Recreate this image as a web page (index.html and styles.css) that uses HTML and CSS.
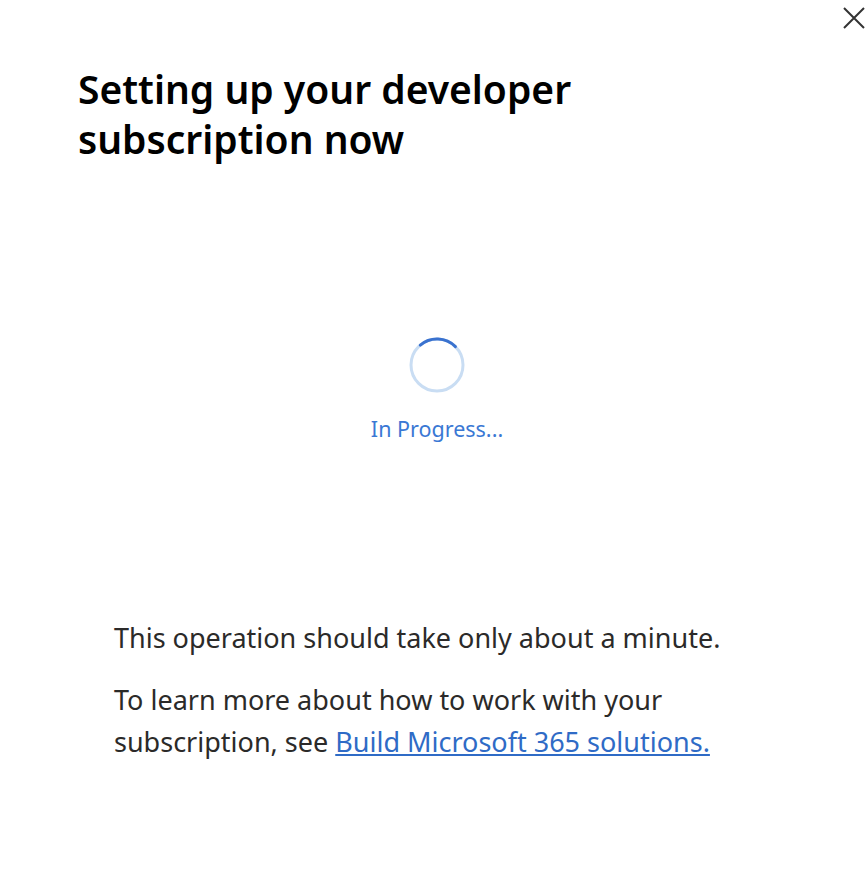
FILE: index.html
```html
<!DOCTYPE html>
<html lang="en">
<head>
    <meta charset="UTF-8">
    <meta name="viewport" content="width=device-width, initial-scale=1.0">
    <title>Setting up your developer subscription</title>
    <link rel="stylesheet" href="styles.css">
</head>
<body>

    <div class="dialog">
        <button type="button" class="close" aria-label="Close">
            <svg width="24" height="24" viewBox="0 0 24 24">
                <path d="M2 2 L22 22 M22 2 L2 22" stroke="#333" stroke-width="2" fill="none"/>
            </svg>
        </button>

        <h1 class="title">Setting up your developer subscription now</h1>

        <div class="progress">
            <div class="spinner">
                <svg width="58" height="58" viewBox="0 0 58 58">
                    <circle cx="29" cy="29" r="26" stroke="#c9ddf3" stroke-width="3" fill="none"/>
                    <!-- dark arc across the top -->
                    <path d="M12.3 9.1 A26 26 0 0 1 47.4 10.6" stroke="#3a72cf" stroke-width="3" fill="none" stroke-linecap="round"/>
                </svg>
            </div>
            <div class="progress-label">In Progress...</div>
        </div>

        <div class="notes">
            <p>This operation should take only about a minute.</p>
            <p>To learn more about how to work with your subscription, see <a href="#">Build Microsoft 365 solutions.</a></p>
        </div>
    </div>

</body>
</html>
```

FILE: styles.css
```css
body {
    margin: 0;
    font-family: "Noto Sans", "Open Sans", sans-serif;
    background: #fff;
}

.dialog {
    position: relative;
    width: 868px;
    height: 876px;
    box-sizing: border-box;
    padding: 64px 40px 0 78px;
}

.close {
    position: absolute;
    top: 6px;
    right: 2px;
    border: none;
    background: none;
    padding: 0;
    cursor: pointer;
}

.title {
    margin: 0;
    width: 580px;
    font-size: 39px;
    line-height: 50px;
    font-weight: 600;
    color: #000;
}

.progress {
    display: flex;
    flex-direction: column;
    align-items: center;
    margin-top: 172px;
    padding-right: 32px;
}

.spinner {
    height: 58px;
}

.progress-label {
    margin-top: 20px;
    font-size: 21.5px;
    color: #3a78d4;
}

.notes {
    margin-top: 174px;
    padding-left: 36px;
    color: #2b2a29;
    font-size: 27px;
    line-height: 42px;
}

.notes p {
    margin: 0 0 20px 0;
    width: 640px;
}

.notes a {
    color: #2f6bc6;
}
```
